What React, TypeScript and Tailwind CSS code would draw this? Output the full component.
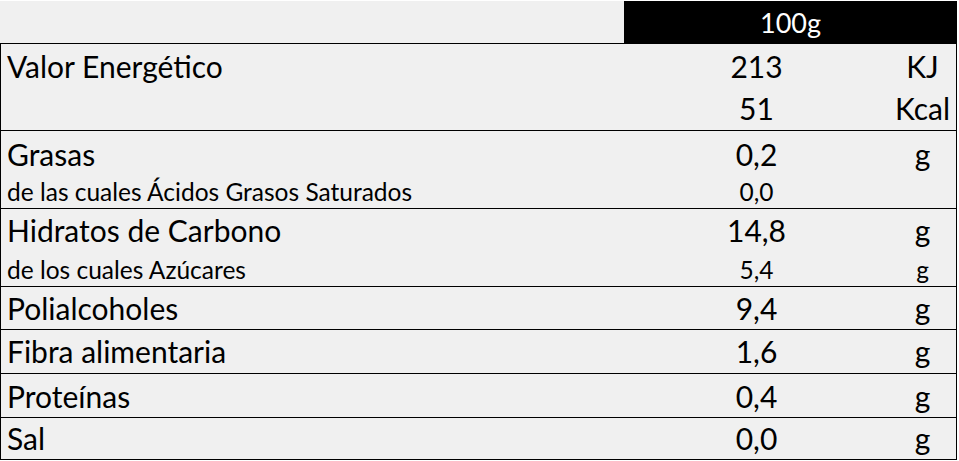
import React from "react";

interface Line {
  label: string;
  value: string;
  unit?: string;
  small?: boolean;
  h: string;
  pt: string;
}

interface Row {
  lines: Line[];
}

const rows: Row[] = [
  {
    lines: [
      { label: "Valor Energético", value: "213", unit: "KJ", h: "h-[43px]", pt: "pt-[7px]" },
      { label: "", value: "51", unit: "Kcal", h: "h-[43px]", pt: "pt-[6px]" },
    ],
  },
  {
    lines: [
      { label: "Grasas", value: "0,2", unit: "g", h: "h-[43px]", pt: "pt-[8px]" },
      { label: "de las cuales Ácidos Grasos Saturados", value: "0,0", small: true, h: "h-[34px]", pt: "pt-[6px]" },
    ],
  },
  {
    lines: [
      { label: "Hidratos de Carbono", value: "14,8", unit: "g", h: "h-[43px]", pt: "pt-[6px]" },
      { label: "de los cuales Azúcares", value: "5,4", unit: "g", small: true, h: "h-[34px]", pt: "pt-[6px]" },
    ],
  },
  { lines: [{ label: "Polialcoholes", value: "9,4", unit: "g", h: "h-[42px]", pt: "pt-[6px]" }] },
  { lines: [{ label: "Fibra alimentaria", value: "1,6", unit: "g", h: "h-[43px]", pt: "pt-[6px]" }] },
  { lines: [{ label: "Proteínas", value: "0,4", unit: "g", h: "h-[43px]", pt: "pt-[7px]" }] },
  { lines: [{ label: "Sal", value: "0,0", unit: "g", h: "h-[41px]", pt: "pt-[5px]" }] },
];

const NutritionLine: React.FC<{ line: Line }> = ({ line }) => {
  const size = line.small ? "text-[24.5px]" : "text-[30px]";
  return (
    <div className={`flex ${line.h} ${line.pt} ${size} leading-none`}>
      <div className="w-[623px] pl-[6px] whitespace-nowrap">{line.label}</div>
      <div className="w-[265px] text-center">{line.value}</div>
      <div className="w-[67px] text-center">{line.unit}</div>
    </div>
  );
};

export default function App() {
  return (
    <div className="w-[959px] h-[461px] bg-white font-['Lato',sans-serif] text-black">
      <div className="w-[957px] mt-[1px] bg-[#f0f0f0]">
        <div className="flex h-[42px]">
          <div className="w-[624px]" />
          <div className="w-[333px] bg-black text-white text-center text-[27px] leading-none pt-[8px]">
            100g
          </div>
        </div>
        <div className="border-l border-r border-b border-black">
          {rows.map((row, i) => (
            <div key={i} className="border-t border-black">
              {row.lines.map((line, j) => (
                <NutritionLine key={j} line={line} />
              ))}
            </div>
          ))}
        </div>
      </div>
    </div>
  );
}
